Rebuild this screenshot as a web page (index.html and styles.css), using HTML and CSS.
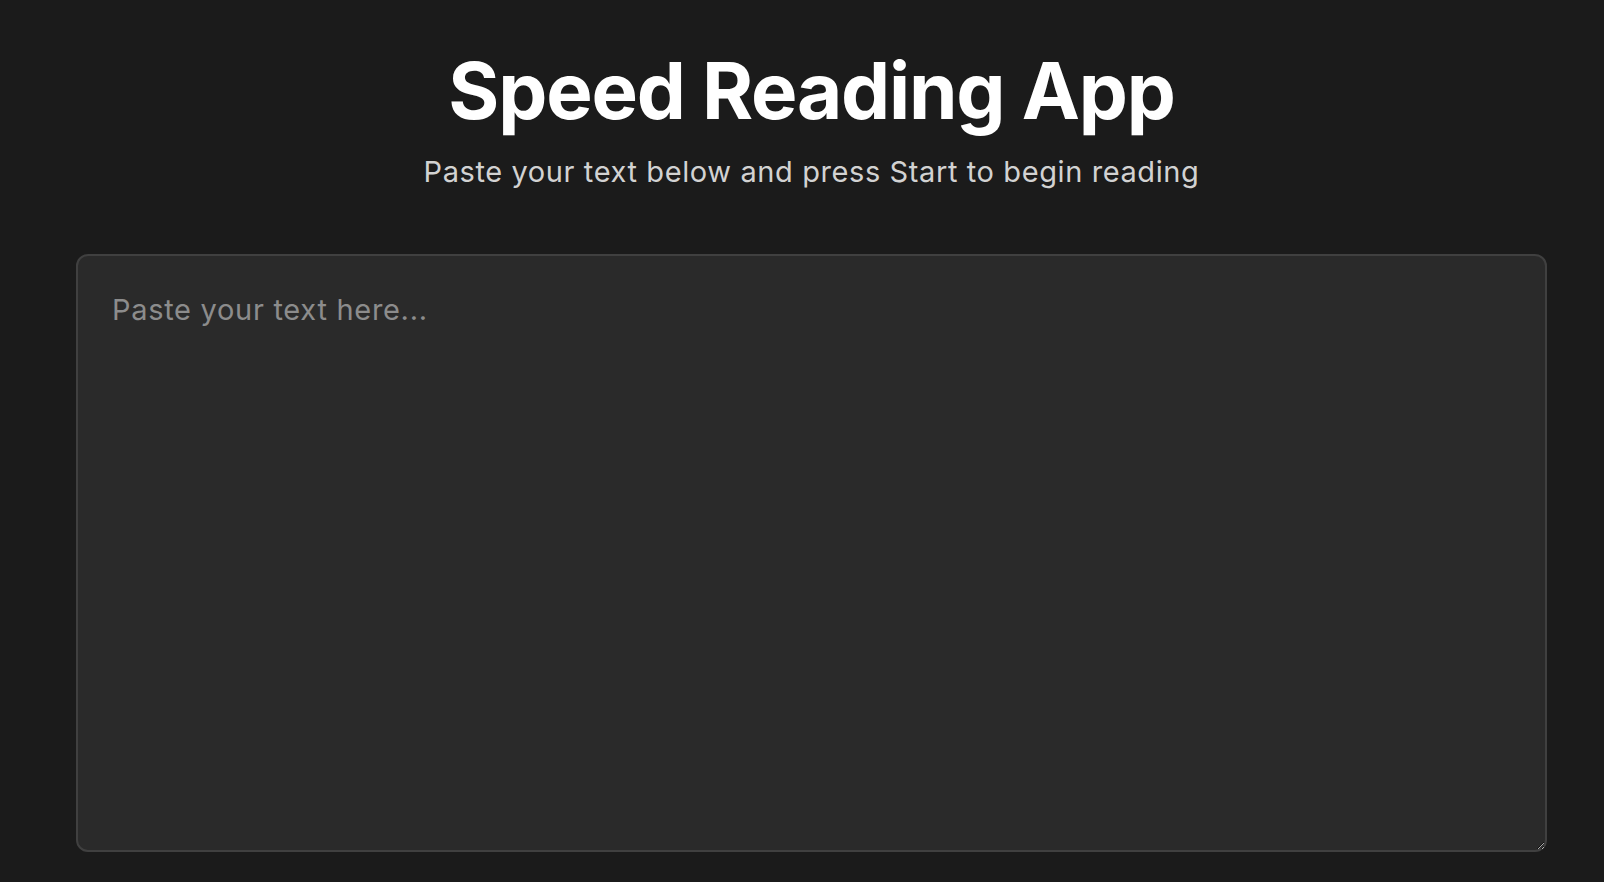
FILE: index.html
```html
<!DOCTYPE html>
<html lang="en">

<head>
  <meta charset="UTF-8">
  <meta name="viewport" content="width=device-width, initial-scale=1.0">
  <title>Speed Reading App</title>
  <link rel="stylesheet" href="styles.css">
</head>

<body>
  <div class="app">
    <header class="header">
      <h1>Speed Reading App</h1>
      <p class="subtitle">Paste your text below and press Start to begin reading</p>
    </header>
    <textarea id="textInput" class="text-input" placeholder="Paste your text here..."></textarea>
  </div>
</body>

</html>
```

FILE: styles.css
```css
body {
  font-family: 'Inter', 'Roboto', sans-serif;
  background-color: #1b1b1b;
  color: #fff;
  margin: 0;
  padding: 0;
}

.app {
  display: flex;
  flex-direction: column;
  padding: 0 57px 0 76px;
}

.header {
  text-align: center;
  margin-bottom: 65px;
}

h1 {
  font-size: 78px;
  font-weight: 700;
  letter-spacing: -1.2px;
  line-height: 1.2;
  margin: 44px 0 0;
}

.subtitle {
  font-size: 29px;
  letter-spacing: 0.6px;
  color: #d2d2d2;
  margin: 16px 0 0;
}

.text-input {
  box-sizing: border-box;
  width: 100%;
  height: 598px;
  padding: 36px 34px;
  background-color: #2a2a2a;
  border: 2px solid #404040;
  border-radius: 12px;
  color: #fff;
  font-family: inherit;
  font-size: 29px;
  letter-spacing: 0.7px;
  resize: vertical;
  outline: none;
}

.text-input::placeholder {
  color: #8c8c8c;
}
```
